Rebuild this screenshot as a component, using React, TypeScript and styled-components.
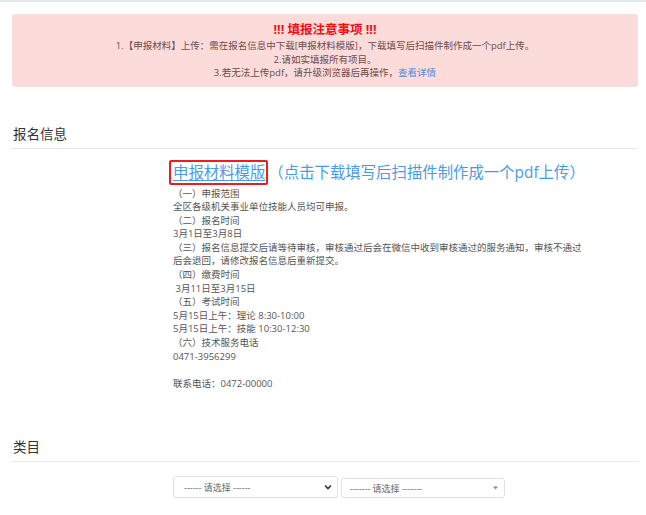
import styled, { createGlobalStyle } from "styled-components"

const GlobalStyle = createGlobalStyle`
    html, body {
        margin: 0;
        padding: 0;
        background: #fff;
        font-family: "Open Sans", "Noto Sans CJK SC", sans-serif;
    }
`

const notes = [
    "（一）申报范围",
    "全区各级机关事业单位技能人员均可申报。",
    "（二）报名时间",
    "3月1日至3月8日",
    "（三）报名信息提交后请等待审核，审核通过后会在微信中收到审核通过的服务通知，审核不通过后会退回，请修改报名信息后重新提交。",
    "（四）缴费时间",
    " 3月11日至3月15日",
    "（五）考试时间",
    "5月15日上午：理论 8:30-10:00",
    "5月15日上午：技能 10:30-12:30",
    "（六）技术服务电话",
    "0471-3956299",
    "",
    "联系电话：0472-00000",
]

export default function App() {
    return (
        <Page>
            <GlobalStyle />
            <TopBar />
            <Container>
                <Alert>
                    <AlertTitle>!!! 填报注意事项 !!!</AlertTitle>
                    <AlertLine>1.【申报材料】上传：需在报名信息中下载[申报材料模版]，下载填写后扫描件制作成一个pdf上传。</AlertLine>
                    <AlertLine>2.请如实填报所有项目。</AlertLine>
                    <AlertLine>
                        3.若无法上传pdf，请升级浏览器后再操作，<AlertLink href="#">查看详情</AlertLink>
                    </AlertLine>
                </Alert>

                <Section $top={38}>
                    <SectionTitle>报名信息</SectionTitle>
                    <Content>
                        <Download>
                            <Boxed href="#">申报材料模版</Boxed>
                            <span>（点击下载填写后扫描件制作成一个pdf上传）</span>
                        </Download>
                        <Notes>
                            {notes.map((n, i) => (
                                <NoteLine key={i}>{n || "\u00a0"}</NoteLine>
                            ))}
                        </Notes>
                    </Content>
                </Section>

                <Section $top={48}>
                    <SectionTitle>类目</SectionTitle>
                    <Selects>
                        <Select $variant="chevron">
                            <span>------ 请选择 ------</span>
                            <svg width="8" height="6" viewBox="0 0 8 6">
                                <path d="M1 1.5 L4 4.5 L7 1.5" fill="none" stroke="#333" strokeWidth="1.6" />
                            </svg>
                        </Select>
                        <Select $variant="caret">
                            <span>------- 请选择 -------</span>
                            <svg width="5" height="4" viewBox="0 0 5 4">
                                <path d="M0 0.5 L5 0.5 L2.5 3.5 Z" fill="#888" />
                            </svg>
                        </Select>
                    </Selects>
                </Section>
            </Container>
        </Page>
    )
}

const Page = styled.div`
    width: 646px;
    min-height: 515px;
`

const TopBar = styled.div`
    height: 2px;
    background: #e4e7ec;
`

const Container = styled.div`
    padding: 12px 8px 0 12px;
`

const Alert = styled.div`
    background: #fbdcdb;
    border-radius: 3px;
    padding: 8px 0 7px;
    text-align: center;
`

const AlertTitle = styled.div`
    color: #f01010;
    font-size: 12.5px;
    font-weight: bold;
    line-height: 16px;
    margin-bottom: 1px;
`

const AlertLine = styled.div`
    color: #6e4b4b;
    font-size: 9.5px;
    line-height: 13.5px;
`

const AlertLink = styled.a`
    color: #3f8fe0;
    text-decoration: none;
`

const Section = styled.div<{ $top: number }>`
    margin-top: ${(p) => p.$top}px;
`

const SectionTitle = styled.div`
    font-size: 13.5px;
    color: #333;
    line-height: 18px;
    padding-bottom: 5px;
    border-bottom: 1px solid #e8e8e8;
    padding-left: 1px;
`

const Content = styled.div`
    padding-left: 161px;
    padding-top: 13px;
    width: 410px;
`

const Download = styled.div`
    font-size: 15.4px;
    line-height: 21px;
    color: #4a9be6;
    margin-left: -4px;
    white-space: nowrap;
`

const Boxed = styled.a`
    color: #4a9be6;
    text-decoration: underline;
    text-decoration-thickness: 1px;
    text-underline-offset: 2px;
    border: 2px solid #ee1c1c;
    border-radius: 2px;
    padding: 0 1px 0 2px;
`

const Notes = styled.div`
    margin-top: 4px;
`

const NoteLine = styled.div`
    font-size: 9.5px;
    line-height: 13.6px;
    color: #555;
    white-space: pre-wrap;
`

const Selects = styled.div`
    display: flex;
    align-items: center;
    gap: 3px;
    padding-left: 161px;
    margin-top: 14px;
`

const Select = styled.div<{ $variant: "chevron" | "caret" }>`
    box-sizing: border-box;
    display: flex;
    align-items: center;
    justify-content: space-between;
    width: ${(p) => (p.$variant === "chevron" ? 165 : 164)}px;
    height: ${(p) => (p.$variant === "chevron" ? 22 : 20)}px;
    margin-top: ${(p) => (p.$variant === "chevron" ? 0 : 2)}px;
    border: 1px solid #dde1e8;
    border-radius: 3px;
    background: #fff;
    padding: ${(p) => (p.$variant === "chevron" ? "0 5px 0 10px" : "0 6px 0 8px")};
    font-size: 9px;
    color: #666;
`
